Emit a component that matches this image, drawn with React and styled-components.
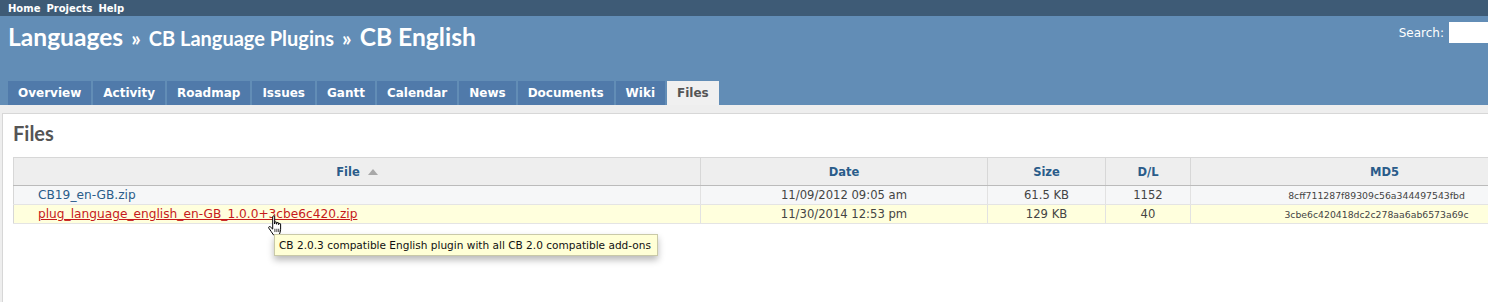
import React from 'react';
import styled, { createGlobalStyle } from 'styled-components';

const GlobalStyle = createGlobalStyle`
  body {
    margin: 0;
    overflow: hidden;
    font-family: "DejaVu Sans", Verdana, sans-serif;
    color: #484848;
    background: #fff;
  }
`;

const Page = styled.div`
  position: relative;
  width: 1600px;
  height: 302px;
  display: flex;
  flex-direction: column;
`;

const TopMenu = styled.div`
  height: 16px;
  background: #3e5b76;
  display: flex;
  align-items: center;
  gap: 6px;
  padding: 0 8px;
`;

const TopLink = styled.a`
  color: #fff;
  font-size: 10px;
  font-weight: bold;
  text-decoration: none;
`;

const Header = styled.div`
  height: 89px;
  background: #628db6;
  display: flex;
  flex-direction: column;
  padding: 0 11px 0 8px;
`;

const HeaderRow = styled.div`
  display: flex;
  justify-content: space-between;
  align-items: flex-start;
  padding-top: 6px;
`;

const Title = styled.h1`
  margin: 0;
  color: #fff;
  font-family: Lato, "Trebuchet MS", sans-serif;
  font-weight: bold;
  line-height: 30px;
  display: flex;
  align-items: baseline;
  gap: 8px;
`;

const Crumb = styled.span`
  font-size: ${p => p.$small ? '20px' : '24.6px'};
`;

const Raquo = styled.span`
  font-size: 21px;
`;

const Search = styled.div`
  display: flex;
  align-items: center;
  gap: 5px;
  color: #fff;
  font-size: 12px;
`;

const SearchInput = styled.div`
  width: 140px;
  height: 21px;
  background: #fff;
`;

const Tabs = styled.ul`
  margin: auto 0 0 0;
  padding: 0;
  list-style: none;
  display: flex;
  gap: 2px;
`;

const Tab = styled.li`
  padding: 4px 10px;
  line-height: 16px;
  font-size: 12px;
  font-weight: bold;
  color: ${p => p.$active ? '#555' : '#fff'};
  background: ${p => p.$active ? '#f0f0f0' : '#507aaa'};
`;

const Main = styled.div`
  flex: 1;
  background: #eeeeee;
  padding: 8px 0 0 2px;
  display: flex;
`;

const Content = styled.div`
  flex: 1;
  background: #fff;
  border: 1px solid #d7d7d7;
  border-bottom: none;
  padding: 5px 10px 10px;
`;

const Heading = styled.h2`
  margin: 0 0 10px;
  font-family: Lato, "Trebuchet MS", sans-serif;
  font-size: 20px;
  line-height: 28px;
  color: #555;
`;

const Table = styled.table`
  width: 1565px;
  border-collapse: collapse;
  table-layout: fixed;
  border: 1px solid #d7d7d7;
  font-size: 11.6px;
`;

const Th = styled.th`
  background: #eeeeee;
  color: #2a5c8a;
  font-size: 11.5px;
  font-weight: bold;
  height: 27px;
  padding: 0 4px;
  border-right: 1px solid #d7d7d7;
  border-bottom: 1px solid #bbb;
  text-align: center;
`;

const SortArrow = styled.span`
  display: inline-block;
  margin-left: 8px;
  width: 0;
  height: 0;
  border-left: 5px solid transparent;
  border-right: 5px solid transparent;
  border-bottom: 6px solid #a8a8a8;
  vertical-align: 1px;
`;

const Row = styled.tr`
  background: ${p => p.$hover ? '#ffffdd' : '#f6f7f8'};
`;

const Td = styled.td`
  height: 18px;
  padding: 0 4px;
  border-right: 1px solid #e2e2e2;
  border-bottom: 1px solid #e4e4e4;
  text-align: ${p => p.$left ? 'left' : 'center'};
  padding-left: ${p => p.$left ? '24px' : '4px'};
  padding-right: ${p => p.$digest ? '20px' : '4px'};
  font-size: ${p => p.$digest ? '9.3px' : '11.6px'};
  color: #444;
  white-space: nowrap;
`;

const FileLink = styled.a`
  font-size: 12.2px;
  color: ${p => p.$hover ? '#c61a1a' : '#2a5c8a'};
  text-decoration: ${p => p.$hover ? 'underline' : 'none'};
`;

const Tooltip = styled.div`
  position: absolute;
  left: 274px;
  top: 234px;
  width: 384px;
  height: 22px;
  box-sizing: border-box;
  padding: 0 4px;
  display: flex;
  align-items: center;
  background: #ffffd6;
  border: 1px solid #c9c9a8;
  box-shadow: 0 4px 7px rgba(0, 0, 0, 0.28);
  color: #111;
  font-size: 10.55px;
  white-space: nowrap;
`;

const Cursor = styled.svg`
  position: absolute;
  left: 266px;
  top: 215px;
`;

const columns = [
  { label: 'File', width: 687, sort: true },
  { label: 'Date', width: 287 },
  { label: 'Size', width: 118 },
  { label: 'D/L', width: 85 },
  { label: 'MD5', width: 388 },
];

const files = [
  { name: 'CB19_en-GB.zip', date: '11/09/2012 09:05 am', size: '61.5 KB', dl: '1152', md5: '8cff711287f89309c56a344497543fbd' },
  { name: 'plug_language_english_en-GB_1.0.0+3cbe6c420.zip', date: '11/30/2014 12:53 pm', size: '129 KB', dl: '40', md5: '3cbe6c420418dc2c278aa6ab6573a69c', hover: true },
];

const tabs = ['Overview', 'Activity', 'Roadmap', 'Issues', 'Gantt', 'Calendar', 'News', 'Documents', 'Wiki', 'Files'];

export default function App() {
  return (
    <Page>
      <GlobalStyle />
      <TopMenu>
        <TopLink>Home</TopLink>
        <TopLink>Projects</TopLink>
        <TopLink>Help</TopLink>
      </TopMenu>
      <Header>
        <HeaderRow>
          <Title>
            <Crumb>Languages</Crumb>
            <Raquo>»</Raquo>
            <Crumb $small>CB Language Plugins</Crumb>
            <Raquo>»</Raquo>
            <Crumb>CB English</Crumb>
          </Title>
          <Search>
            Search:
            <SearchInput />
          </Search>
        </HeaderRow>
        <Tabs>
          {tabs.map(t => <Tab key={t} $active={t === 'Files'}>{t}</Tab>)}
        </Tabs>
      </Header>
      <Main>
        <Content>
          <Heading>Files</Heading>
          <Table>
            <colgroup>
              {columns.map(c => <col key={c.label} style={{ width: c.width }} />)}
            </colgroup>
            <thead>
              <tr>
                {columns.map(c => (
                  <Th key={c.label}>{c.label}{c.sort && <SortArrow />}</Th>
                ))}
              </tr>
            </thead>
            <tbody>
              {files.map(f => (
                <Row key={f.name} $hover={f.hover}>
                  <Td $left><FileLink $hover={f.hover}>{f.name}</FileLink></Td>
                  <Td>{f.date}</Td>
                  <Td>{f.size}</Td>
                  <Td>{f.dl}</Td>
                  <Td $digest>{f.md5}</Td>
                </Row>
              ))}
            </tbody>
          </Table>
        </Content>
      </Main>
      <Cursor width="20" height="22" viewBox="0 0 18 20">
        <path
          d="M6 1.6C6 .6 7.8 .6 7.8 1.6V8.2V6.9C7.8 6 9.6 6 9.6 6.9V8.4V7.4C9.6 6.6 11.4 6.6 11.4 7.4V8.8V8.2C11.4 7.5 13.2 7.5 13.2 8.2V13C13.2 15 12.4 16.4 11.9 18H6.6C5.6 16.3 3.6 13.6 2.5 12C1.8 11 3 10 3.9 10.8L6 12.8Z"
          fill="#fff"
          stroke="#000"
          strokeWidth="0.9"
          strokeLinejoin="round"
        />
        <path d="M8 12.5V15.5M9.8 12.5V15.5M11.5 12.5V15.5" stroke="#000" strokeWidth="0.7" />
      </Cursor>
      <Tooltip>CB 2.0.3 compatible English plugin with all CB 2.0 compatible add-ons</Tooltip>
    </Page>
  );
}
